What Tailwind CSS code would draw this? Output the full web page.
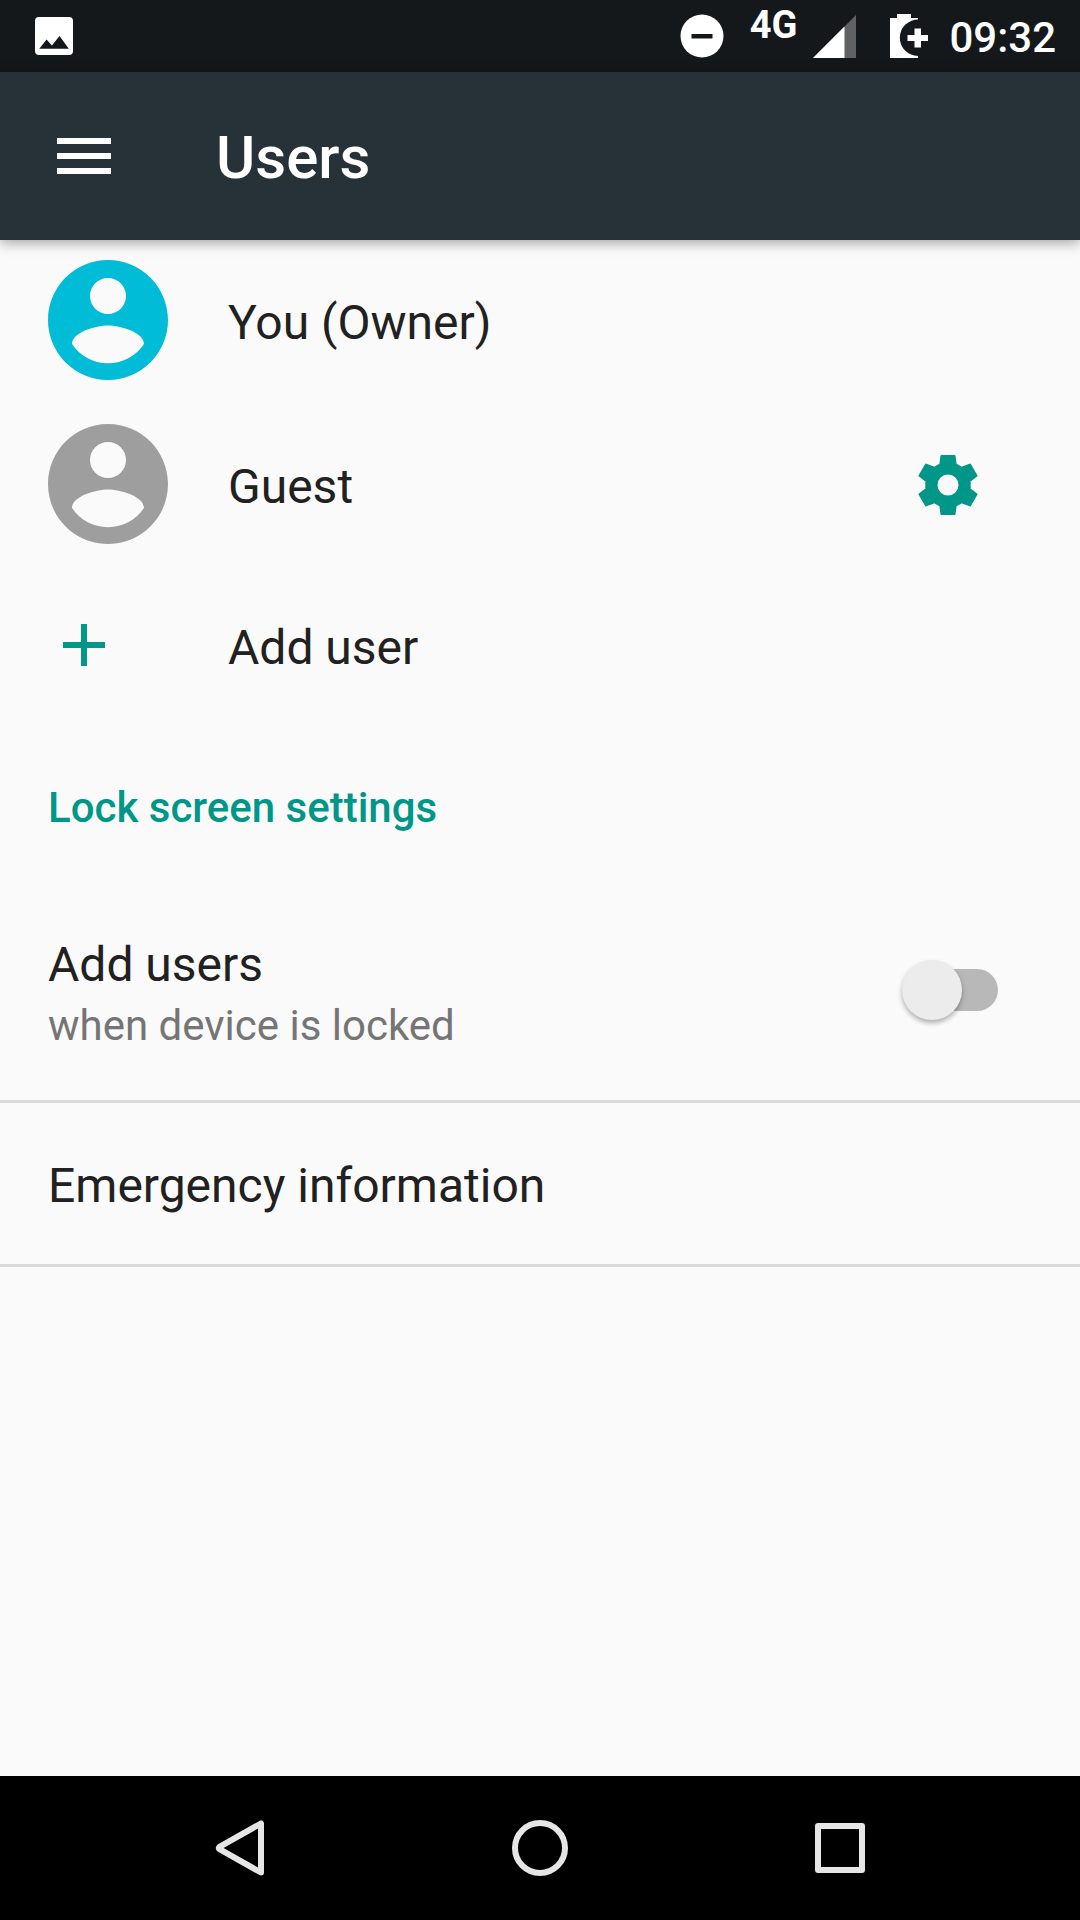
<!DOCTYPE html>
<html lang="en">
<head>
<meta charset="utf-8">
<meta name="viewport" content="width=device-width, initial-scale=1">
<title>Users</title>
<script src="https://cdn.jsdelivr.net/npm/@tailwindcss/browser@4"></script>
</head>
<body class="flex min-h-screen flex-col bg-[#fafafa] font-['Roboto',sans-serif] text-[48px] leading-[56px] text-[#212121]">

  <!-- Status bar -->
  <div class="flex h-[72px] items-center bg-[#14181b] pr-6 pl-[35px] text-white">
    <svg class="size-[38px]" viewBox="0 0 38 38" fill="currentColor" aria-hidden="true"><path fill-rule="evenodd" d="M4 0h30a4 4 0 0 1 4 4v30a4 4 0 0 1-4 4H4a4 4 0 0 1-4-4V4a4 4 0 0 1 4-4zM4.300 31.800h29.500L24.500 19l-7.600 9.600-5.300-6.200z"/></svg>
    <div class="ml-auto flex items-center">
      <svg class="size-11" viewBox="0 0 44 44" aria-hidden="true"><circle cx="22" cy="22" r="21.500" fill="currentColor"/><path d="M11.500 20h21v4.500h-21z" fill="#14181b"/></svg>
      <span class="mb-[22px] ml-[26px] text-[38px] leading-9 font-bold">4G</span>
      <svg class="ml-4 h-11 w-[43px]" viewBox="0 0 43 44" aria-hidden="true"><path d="M43 1v43H0z" fill="#5f6163"/><path d="M31.500 12.500V44H0z" fill="currentColor"/></svg>
      <svg class="ml-[34px] h-11 w-[38px]" viewBox="0 0 38 44" fill="currentColor" aria-hidden="true"><path d="M7 0h14v4h7v1.500a18.200 18.200 0 0 0 0 36.400V44H0V4h7z"/><path d="M24.500 14.500h6.500v6.500h7v6h-7v6.500h-6.500V27h-7v-6h7z"/></svg>
      <time class="ml-[21px] pt-[3px] text-[42px] leading-[50px] font-medium">09:32</time>
    </div>
  </div>

  <!-- App bar -->
  <header class="relative z-10 flex h-[168px] items-center bg-[#263238] pl-12 text-white shadow-[0_3px_12px_rgba(0,0,0,0.35)]">
    <button type="button" aria-label="Open menu" class="size-[72px]">
      <svg class="size-[72px]" viewBox="0 0 24 24" fill="currentColor" aria-hidden="true"><path d="M3 18h18v-2H3v2zm0-5h18v-2H3v2zm0-7v2h18V6H3z"/></svg>
    </button>
    <h1 class="ml-24 pt-[3px] text-[60px] leading-[70px] font-medium">Users</h1>
  </header>

  <main class="grow">
    <ul>
      <li class="flex h-40 items-center px-12">
        <a href="#owner" class="flex grow items-center gap-[60px]">
          <svg class="size-[120px] text-[#00bcd6]" viewBox="2 2 20 20" fill="currentColor" aria-hidden="true"><path d="M12 2C6.480 2 2 6.480 2 12s4.480 10 10 10 10-4.480 10-10S17.520 2 12 2zm0 3c1.660 0 3 1.340 3 3s-1.340 3-3 3-3-1.340-3-3 1.340-3 3-3zm0 14.200c-2.500 0-4.710-1.280-6-3.220.030-1.990 4-3.080 6-3.080 1.990 0 5.970 1.090 6 3.080-1.290 1.940-3.500 3.220-6 3.220z"/></svg>
          <span class="pt-[5px]">You (Owner)</span>
        </a>
      </li>
      <li class="flex h-[168px] items-center pr-24 pl-12">
        <a href="#guest" class="flex grow items-center gap-[60px]">
          <svg class="size-[120px] text-[#9e9e9e]" viewBox="2 2 20 20" fill="currentColor" aria-hidden="true"><path d="M12 2C6.480 2 2 6.480 2 12s4.480 10 10 10 10-4.480 10-10S17.520 2 12 2zm0 3c1.660 0 3 1.340 3 3s-1.340 3-3 3-3-1.340-3-3 1.340-3 3-3zm0 14.200c-2.500 0-4.710-1.280-6-3.220.030-1.990 4-3.080 6-3.080 1.990 0 5.970 1.090 6 3.080-1.290 1.940-3.500 3.220-6 3.220z"/></svg>
          <span class="pt-[5px]">Guest</span>
        </a>
        <button type="button" aria-label="Guest settings" class="size-[72px] text-[#009688]">
          <svg class="size-[72px]" viewBox="-36 -37 72 72" aria-hidden="true"><path fill="currentColor" stroke="currentColor" stroke-width="2" stroke-linejoin="round" fill-rule="evenodd" d="M-6.500-29H6.500L7.700-20.600 13.700-17.200 22-20.400 28.500-9.200 21.700-4V4L28.500 9.200 22 20.400 13.700 17.200 7.700 20.600 6.500 29H-6.500L-7.700 20.600-13.700 17.200-22 20.400-28.500 9.200-21.700 4V-4L-28.500-9.200-22-20.400-13.700-17.200-7.700-20.600zM11.500 0A11.500 11.500 0 1 0-11.500 0 11.500 11.500 0 1 0 11.500 0z"/></svg>
        </button>
      </li>
      <li>
        <button type="button" class="flex h-[154px] w-full items-center gap-[108px] px-12 text-left">
          <svg class="size-[72px] text-[#009688]" viewBox="0 0 24 24" fill="currentColor" aria-hidden="true"><path d="M19 13h-6v6h-2v-6H5v-2h6V5h2v6h6v2z"/></svg>
          <span class="pt-[5px]">Add user</span>
        </button>
      </li>
    </ul>

    <section>
      <h2 class="px-12 pt-[61px] pb-[47px] text-[42px] leading-[50px] font-medium text-[#009688]">Lock screen settings</h2>
      <label class="flex items-center justify-between border-b-3 border-[#dadada] pr-[82px] pl-12">
        <span class="pt-[57px] pb-[49px]">
          <span class="block">Add users</span>
          <span class="mt-2 block text-[42px] leading-[50px] text-[#757575]">when device is locked</span>
        </span>
        <input type="checkbox" role="switch" class="relative h-[60px] w-24 appearance-none before:absolute before:top-[9px] before:right-0 before:h-[42px] before:w-[84px] before:rounded-full before:bg-[#b8b8b8] before:content-[''] after:absolute after:top-0 after:left-0 after:size-[60px] after:rounded-full after:bg-[#ececec] after:shadow-[0_3px_5px_rgba(0,0,0,0.3)] after:content-[''] checked:before:bg-[#80cbc4] checked:after:left-9 checked:after:bg-[#009688]">
      </label>
      <a href="#emergency" class="flex h-[164px] items-center border-b-3 border-[#dadada] px-12 pt-[5px]">Emergency information</a>
    </section>
  </main>

  <!-- System navigation -->
  <nav aria-label="System" class="grid h-36 grid-cols-3 bg-black px-[90px] text-[#e6e6e6]">
    <button type="button" aria-label="Back" class="grid place-items-center">
      <svg class="size-[60px]" viewBox="0 0 60 60" fill="none" stroke="currentColor" stroke-width="6" stroke-linejoin="round" aria-hidden="true"><path d="M51 5.500v49L9.500 31.200q-1.500-1.200 0-2.400z"/></svg>
    </button>
    <button type="button" aria-label="Home" class="grid place-items-center">
      <svg class="size-[60px]" viewBox="0 0 60 60" fill="none" stroke="currentColor" stroke-width="6" aria-hidden="true"><circle cx="30" cy="30" r="25"/></svg>
    </button>
    <button type="button" aria-label="Recent apps" class="grid place-items-center">
      <svg class="size-[60px]" viewBox="0 0 60 60" fill="none" stroke="currentColor" stroke-width="6" stroke-linejoin="round" aria-hidden="true"><path d="M8 8h44v44H8z"/></svg>
    </button>
  </nav>
</body>
</html>
